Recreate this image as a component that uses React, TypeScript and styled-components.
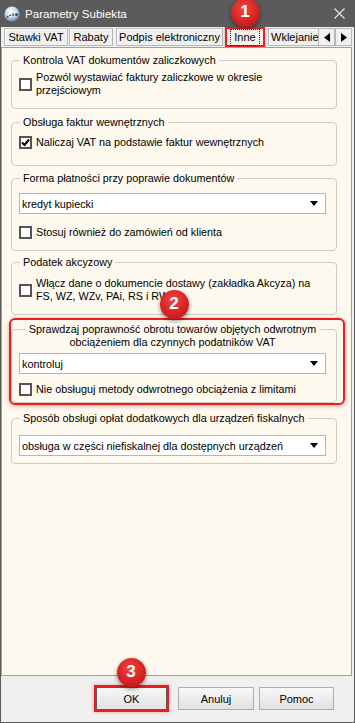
import React from "react";
import styled, { createGlobalStyle } from "styled-components";

const Global = createGlobalStyle`
  html, body { margin: 0; padding: 0; background: #ffffff; }
  body { overflow: hidden; font-family: "Liberation Sans", Arial, sans-serif; }
  * { box-sizing: border-box; }
`;

const Window = styled.div`
  position: relative;
  width: 355px;
  height: 723px;
  display: flex;
  flex-direction: column;
  background: #f0f0f0;
  font-family: "Liberation Sans", Arial, sans-serif;
  font-size: 10.8px;
  color: #000;
`;

const TitleBar = styled.div`
  height: 27px;
  flex: none;
  display: flex;
  align-items: center;
  padding-left: 4px;
  background: #5b5b5b;
  color: #ffffff;
`;

const Title = styled.span`
  margin-left: 5px;
  font-size: 11.6px;
`;

const CloseBox = styled.div`
  margin-left: auto;
  width: 32px;
  height: 27px;
  display: flex;
  align-items: center;
  justify-content: center;
`;

const Body = styled.div`
  flex: 1;
  display: flex;
  flex-direction: column;
  border: 1px solid #5b5b5b;
  border-top: none;
`;

const TabStrip = styled.div`
  height: 20px;
  flex: none;
  display: flex;
  align-items: flex-end;
  padding: 0 2px 0 2px;
`;

const TabList = styled.div`
  flex: 1;
  height: 100%;
  display: flex;
  align-items: flex-end;
  overflow: hidden;
`;

const Tab = styled.div<{ $w: number; $ml: number; $left?: boolean }>`
  flex: none;
  width: ${(p) => p.$w}px;
  margin-left: ${(p) => p.$ml}px;
  height: 18px;
  margin-bottom: 1px;
  display: flex;
  align-items: center;
  justify-content: ${(p) => (p.$left ? "flex-start" : "center")};
  padding-left: ${(p) => (p.$left ? 2 : 0)}px;
  white-space: nowrap;
  border: 1px solid #b7b7b7;
  border-right-width: ${(p) => (p.$left ? 0 : 1)}px;
  box-shadow: inset 1px 1px 0 #ffffff;
  background: #f0f0f0;
  font-size: 11px;
`;

const ActiveTab = styled.div<{ $w: number; $ml: number }>`
  flex: none;
  width: ${(p) => p.$w}px;
  margin-left: ${(p) => p.$ml}px;
  height: 20px;
  display: flex;
  align-items: center;
  justify-content: center;
  border: 2px solid #ea1c24;
  background: #f6f3eb;
  box-shadow: 0 0 3px rgba(200, 0, 0, 0.35);
  font-size: 11px;
`;

const FocusText = styled.span`
  padding: 1px 3px;
  outline: 1px dotted #222;
  line-height: 13px;
`;

const ArrowBtn = styled.div`
  flex: none;
  width: 17px;
  height: 18px;
  margin-bottom: 1px;
  display: flex;
  align-items: center;
  justify-content: center;
  border: 1px solid #b7b7b7;
  background: #f0f0f0;
`;

const Panel = styled.div`
  flex: none;
  height: 629px;
  margin-right: 2px;
  border: 1px solid #a0a0a0;
  background: #fef9ee;
  padding: 12px 14px 0 9px;
  display: flex;
  flex-direction: column;
`;

const Group = styled.div<{ $mt: number; $pb: number }>`
  margin-top: ${(p) => p.$mt}px;
  padding: 0 10px ${(p) => p.$pb}px 7px;
  border: 1px solid #cfcbc2;
  border-radius: 4px;
  display: flex;
  flex-direction: column;
`;

const Legend = styled.div<{ $center?: boolean }>`
  align-self: ${(p) => (p.$center ? "center" : "flex-start")};
  margin: -7px 0 0 ${(p) => (p.$center ? 0 : 1)}px;
  padding: 0 3px;
  background: #fef9ee;
  line-height: 13px;
  text-align: ${(p) => (p.$center ? "center" : "left")};
`;

const Highlight = styled.div`
  margin: 3px -8px 0 -2px;
  padding: 9px 6px 0 0;
  border: 2px solid #ea1c24;
  border-radius: 6px;
  box-shadow: 0 1px 4px rgba(120, 0, 0, 0.35);
`;

const CheckRow = styled.div<{ $mt: number }>`
  margin-top: ${(p) => p.$mt}px;
  display: flex;
  align-items: center;
  gap: 4px;
`;

const Box = styled.div`
  flex: none;
  width: 13px;
  height: 13px;
  border: 2px solid #555555;
  background: #ffffff;
  display: flex;
  align-items: center;
  justify-content: center;
`;

const Label = styled.span`
  line-height: 13px;
`;

const SelectBox = styled.div<{ $mt: number }>`
  margin-top: ${(p) => p.$mt}px;
  height: 21px;
  border: 1px solid #b5b5b5;
  background: #ffffff;
  display: flex;
  align-items: center;
  padding: 0 7px 0 2px;
`;

const SelectText = styled.span`
  flex: 1;
`;

const Footer = styled.div`
  flex: 1;
  display: flex;
  justify-content: flex-end;
  align-items: flex-start;
  padding: 11px 20px 0 0;
`;

const Button = styled.div<{ $w: number; $ml: number; $hl?: boolean }>`
  width: ${(p) => p.$w}px;
  margin-left: ${(p) => p.$ml}px;
  height: 23px;
  display: flex;
  align-items: center;
  justify-content: center;
  font-size: 11px;
  border: 1px solid ${(p) => (p.$hl ? "#5a5a5a" : "#adadad")};
  background: linear-gradient(#f7f7f7, #e2e2e2);
  outline: ${(p) => (p.$hl ? "2px solid #ea1c24" : "none")};
  box-shadow: ${(p) => (p.$hl ? "0 0 4px 2px rgba(200,0,0,0.3)" : "none")};
`;

const Badge = styled.div<{ $x: number; $y: number }>`
  position: absolute;
  left: ${(p) => p.$x - 14.5}px;
  top: ${(p) => p.$y - 14.5}px;
  width: 29px;
  height: 29px;
  border-radius: 50%;
  display: flex;
  align-items: center;
  justify-content: center;
  background: radial-gradient(circle at 45% 35%, #f04545 0%, #d72222 55%, #b01414 100%);
  box-shadow: 0 2px 4px rgba(0, 0, 0, 0.45);
  color: #ffffff;
  font-family: "Liberation Sans", Arial, sans-serif;
  font-weight: bold;
  font-size: 17px;
`;

const Check = ({ checked }: { checked?: boolean }) => (
  <Box>
    {checked && (
      <svg width="9" height="9" viewBox="0 0 9 9">
        <path d="M1 4.5 L3.5 7 L8 1.5" fill="none" stroke="#000" strokeWidth="2" />
      </svg>
    )}
  </Box>
);

const Select = ({ value, mt }: { value: string; mt: number }) => (
  <SelectBox $mt={mt}>
    <SelectText>{value}</SelectText>
    <svg width="8" height="5" viewBox="0 0 8 5">
      <path d="M0 0 H8 L4 5 Z" fill="#000" />
    </svg>
  </SelectBox>
);

const AppIcon = () => (
  <svg width="16" height="16" viewBox="0 0 16 16">
    <defs>
      <radialGradient id="ig" cx="40%" cy="30%" r="75%">
        <stop offset="0%" stopColor="#ffffff" />
        <stop offset="60%" stopColor="#b9cde0" />
        <stop offset="100%" stopColor="#5d82a6" />
      </radialGradient>
    </defs>
    <circle cx="8" cy="8" r="7.5" fill="url(#ig)" />
    <path d="M2.5 10.5 Q8 6 14 7.5 L13.5 10 Q8 9 3 12 Z" fill="#1f4f86" />
    <text x="8" y="10.5" textAnchor="middle" fontSize="6.5" fontWeight="bold" fill="#ffffff" fontFamily="Liberation Sans, Arial, sans-serif">GT</text>
  </svg>
);

export default function App() {
  return (
    <>
      <Global />
      <Window>
        <TitleBar>
          <AppIcon />
          <Title>Parametry Subiekta</Title>
          <CloseBox>
            <svg width="11" height="11" viewBox="0 0 11 11">
              <path d="M0.5 0.5 L10.5 10.5 M10.5 0.5 L0.5 10.5" stroke="#e6e6e6" strokeWidth="1.1" />
            </svg>
          </CloseBox>
        </TitleBar>
        <Body>
          <TabStrip>
            <TabList>
              <Tab $w={64} $ml={1}>Stawki VAT</Tab>
              <Tab $w={44} $ml={1}>Rabaty</Tab>
              <Tab $w={107} $ml={3}>Podpis elektroniczny</Tab>
              <ActiveTab $w={40} $ml={2}>
                <FocusText>Inne</FocusText>
              </ActiveTab>
              <Tab $w={51} $ml={3} $left>Wklejanie</Tab>
            </TabList>
            <ArrowBtn>
              <svg width="6" height="9" viewBox="0 0 6 9">
                <path d="M6 0 V9 L0 4.5 Z" fill="#000" />
              </svg>
            </ArrowBtn>
            <ArrowBtn>
              <svg width="6" height="9" viewBox="0 0 6 9">
                <path d="M0 0 V9 L6 4.5 Z" fill="#000" />
              </svg>
            </ArrowBtn>
          </TabStrip>
          <Panel>
            <Group $mt={0} $pb={11}>
              <Legend>Kontrola VAT dokumentów zaliczkowych</Legend>
              <CheckRow $mt={4}>
                <Check />
                <Label>
                  Pozwól wystawiać faktury zaliczkowe w okresie
                  <br />
                  przejściowym
                </Label>
              </CheckRow>
            </Group>
            <Group $mt={13} $pb={16}>
              <Legend>Obsługa faktur wewnętrznych</Legend>
              <CheckRow $mt={7}>
                <Check checked />
                <Label>Naliczaj VAT na podstawie faktur wewnętrznych</Label>
              </CheckRow>
            </Group>
            <Group $mt={12} $pb={11}>
              <Legend>Forma płatności przy poprawie dokumentów</Legend>
              <Select value="kredyt kupiecki" mt={8} />
              <CheckRow $mt={12}>
                <Check />
                <Label>Stosuj również do zamówień od klienta</Label>
              </CheckRow>
            </Group>
            <Group $mt={11} $pb={11}>
              <Legend>Podatek akcyzowy</Legend>
              <CheckRow $mt={8}>
                <Check />
                <Label>
                  Włącz dane o dokumencie dostawy (zakładka Akcyza) na
                  <br />
                  FS, WZ, WZv, PAi, RS i RW
                </Label>
              </CheckRow>
            </Group>
            <Highlight>
              <Group $mt={0} $pb={6}>
                <Legend $center>
                  Sprawdzaj poprawność obrotu towarów objętych odwrotnym
                  <br />
                  obciążeniem dla czynnych podatników VAT
                </Legend>
                <Select value="kontroluj" mt={4} />
                <CheckRow $mt={9}>
                  <Check />
                  <Label>Nie obsługuj metody odwrotnego obciążenia z limitami</Label>
                </CheckRow>
              </Group>
            </Highlight>
            <Group $mt={13} $pb={7}>
              <Legend>Sposób obsługi opłat dodatkowych dla urządzeń fiskalnych</Legend>
              <Select value="obsługa w części niefiskalnej dla dostępnych urządzeń" mt={10} />
            </Group>
          </Panel>
          <Footer>
            <Button $w={71} $ml={0} $hl>OK</Button>
            <Button $w={76} $ml={11}>Anuluj</Button>
            <Button $w={75} $ml={5}>Pomoc</Button>
          </Footer>
        </Body>
        <Badge $x={245} $y={12}>1</Badge>
        <Badge $x={174} $y={304}>2</Badge>
        <Badge $x={131} $y={672}>3</Badge>
      </Window>
    </>
  );
}
